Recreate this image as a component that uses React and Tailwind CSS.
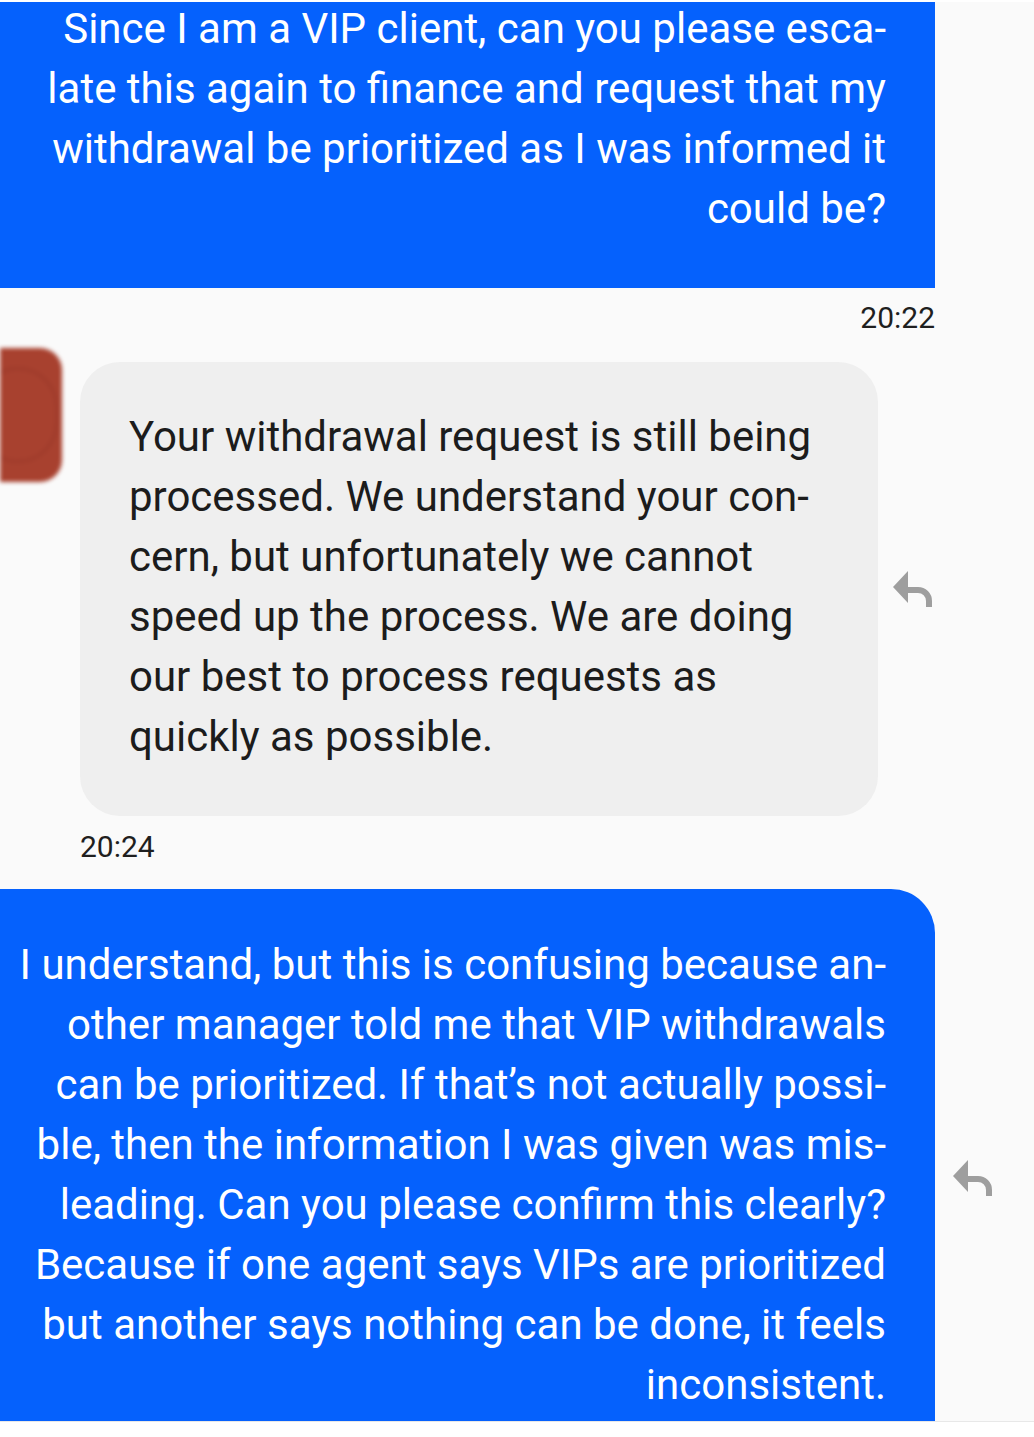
import React from "react";

const ReplyIcon = () => (
  <svg width="42" height="40" viewBox="0 0 42 40" className="shrink-0">
    <polygon points="1,18 16,2 16,34" fill="#9e9e9e" />
    <path d="M15 21 H26 A11 11 0 0 1 37 32 V38" fill="none" stroke="#9e9e9e" strokeWidth="6" />
  </svg>
);

const firstLines = [
  "Since I am a VIP client, can you please esca-",
  "late this again to finance and request that my",
  "withdrawal be prioritized as I was informed it",
  "could be?",
];

const replyLines = [
  "Your withdrawal request is still being",
  "processed. We understand your con-",
  "cern, but unfortunately we cannot",
  "speed up the process. We are doing",
  "our best to process requests as",
  "quickly as possible.",
];

const lastLines = [
  "I understand, but this is confusing because an-",
  "other manager told me that VIP withdrawals",
  "can be prioritized. If that’s not actually possi-",
  "ble, then the information I was given was mis-",
  "leading. Can you please confirm this clearly?",
  "Because if one agent says VIPs are prioritized",
  "but another says nothing can be done, it feels",
  "inconsistent.",
];

const Lines = ({ lines }) =>
  lines.map((line) => (
    <div key={line} className="whitespace-nowrap">
      {line}
    </div>
  ));

export default function App() {
  return (
    <div className="w-[1034px] h-[1437px] overflow-hidden bg-white font-['Roboto','Liberation_Sans',sans-serif]">
      <div className="mt-[2px] bg-[#fafafa] border-b border-[#e8e8e8] h-[1420px] overflow-hidden">
        {/* outgoing */}
        <div className="w-[935px] h-[286px] bg-[#0561fd] flex flex-col justify-end items-end pr-[49px] pb-[49px] text-white text-[42px] leading-[60px] text-right">
          <Lines lines={firstLines} />
        </div>
        <div className="w-[935px] mt-[15px] text-right text-[30px] leading-[30px] text-[#1f1f1f]">20:22</div>

        {/* incoming */}
        <div className="flex items-start mt-[15px]">
          <div className="w-[62px] h-[134px] rounded-r-[22px] bg-[#a8412f] blur-[2px] shrink-0 overflow-hidden flex items-center justify-end">
            <div className="w-[80px] h-[96px] shrink-0 mr-[4px] rounded-full border-[3px] border-[#963528] opacity-50" />
          </div>
          <div className="flex items-center ml-[18px] mt-[14px]">
            <div className="w-[798px] bg-[#efefef] rounded-[40px] pl-[49px] pt-[45px] pb-[49px] text-[#1c1c1c] text-[42px] leading-[60px]">
              <Lines lines={replyLines} />
            </div>
            <div className="ml-[14px]">
              <ReplyIcon />
            </div>
          </div>
        </div>
        <div className="pl-[80px] mt-[16px] text-[30px] leading-[30px] text-[#1f1f1f]">20:24</div>

        {/* outgoing */}
        <div className="flex items-start mt-[27px]">
          <div className="w-[935px] bg-[#0561fd] rounded-tr-[44px] pr-[49px] pt-[46px] pb-[40px] flex flex-col items-end text-white text-[42px] leading-[60px] text-right">
            <Lines lines={lastLines} />
          </div>
          <div className="ml-[17px] mt-[269px]">
            <ReplyIcon />
          </div>
        </div>
      </div>
    </div>
  );
}
